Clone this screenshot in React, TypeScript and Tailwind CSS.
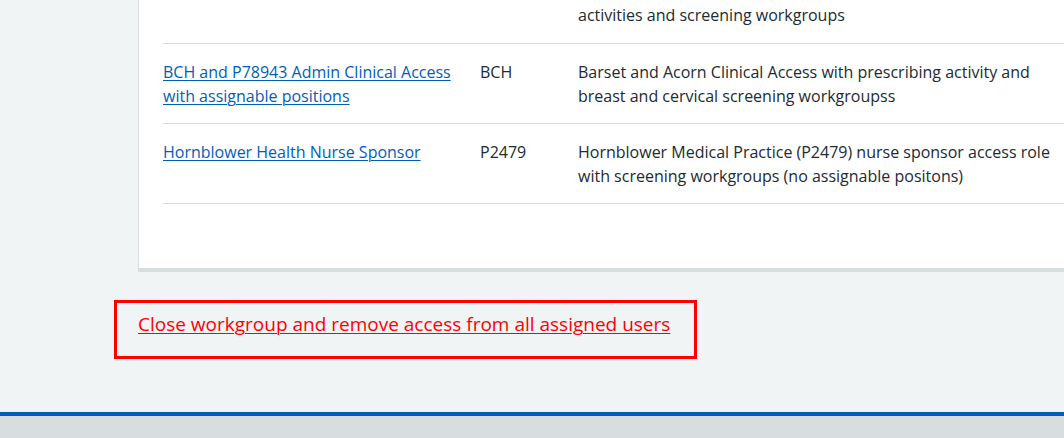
const rows = [
  {
    name: "",
    code: "",
    description: "activities and screening workgroups",
    partial: true,
  },
  {
    name: "BCH and P78943 Admin Clinical Access with assignable positions",
    code: "BCH",
    description:
      "Barset and Acorn Clinical Access with prescribing activity and breast and cervical screening workgroupss",
  },
  {
    name: "Hornblower Health Nurse Sponsor",
    code: "P2479",
    description:
      "Hornblower Medical Practice (P2479) nurse sponsor access role with screening workgroups (no assignable positons)",
  },
];

export default function App() {
  return (
    <div
      className="flex h-[438px] w-full flex-col overflow-hidden bg-[#f0f4f5] text-[16px] leading-6 text-[#212b32]"
      style={{ fontFamily: '"Open Sans", "Liberation Sans", Arial, sans-serif' }}
    >
      <main className="flex-1 pl-[114px]">
        {/* Role list card, scrolled so only its lower part shows */}
        <section className="ml-[24px] w-[950px] border-b-4 border-l border-[#d8dde0] bg-white pb-[64px] pl-[24px]">
          {rows.map((row, i) => (
            <div
              key={i}
              className={`grid grid-cols-[317px_98px_1fr] border-b border-[#d8dde0] ${
                row.partial ? "pt-[3px] pb-4" : "pt-4 pb-[15px]"
              }`}
            >
              <div className="pr-6">
                {row.name && (
                  <a
                    href="#"
                    className="text-[#005eb8] underline decoration-1 underline-offset-2"
                  >
                    {row.name}
                  </a>
                )}
              </div>
              <div className="pr-4">{row.code}</div>
              <div className="pr-6">{row.description}</div>
            </div>
          ))}
        </section>

        <div className="mt-[28px] h-[59px] w-[583px] border-[3px] border-[#ff0000] pl-[21px] pt-[7px]">
          <a
            href="#"
            className="text-[19px] leading-7 text-[#ff0000] underline decoration-1 underline-offset-2"
          >
            Close workgroup and remove access from all assigned users
          </a>
        </div>
      </main>

      <footer className="h-[26px] shrink-0 border-t-4 border-[#005eb8] bg-[#d8dde0]" />
    </div>
  );
}
